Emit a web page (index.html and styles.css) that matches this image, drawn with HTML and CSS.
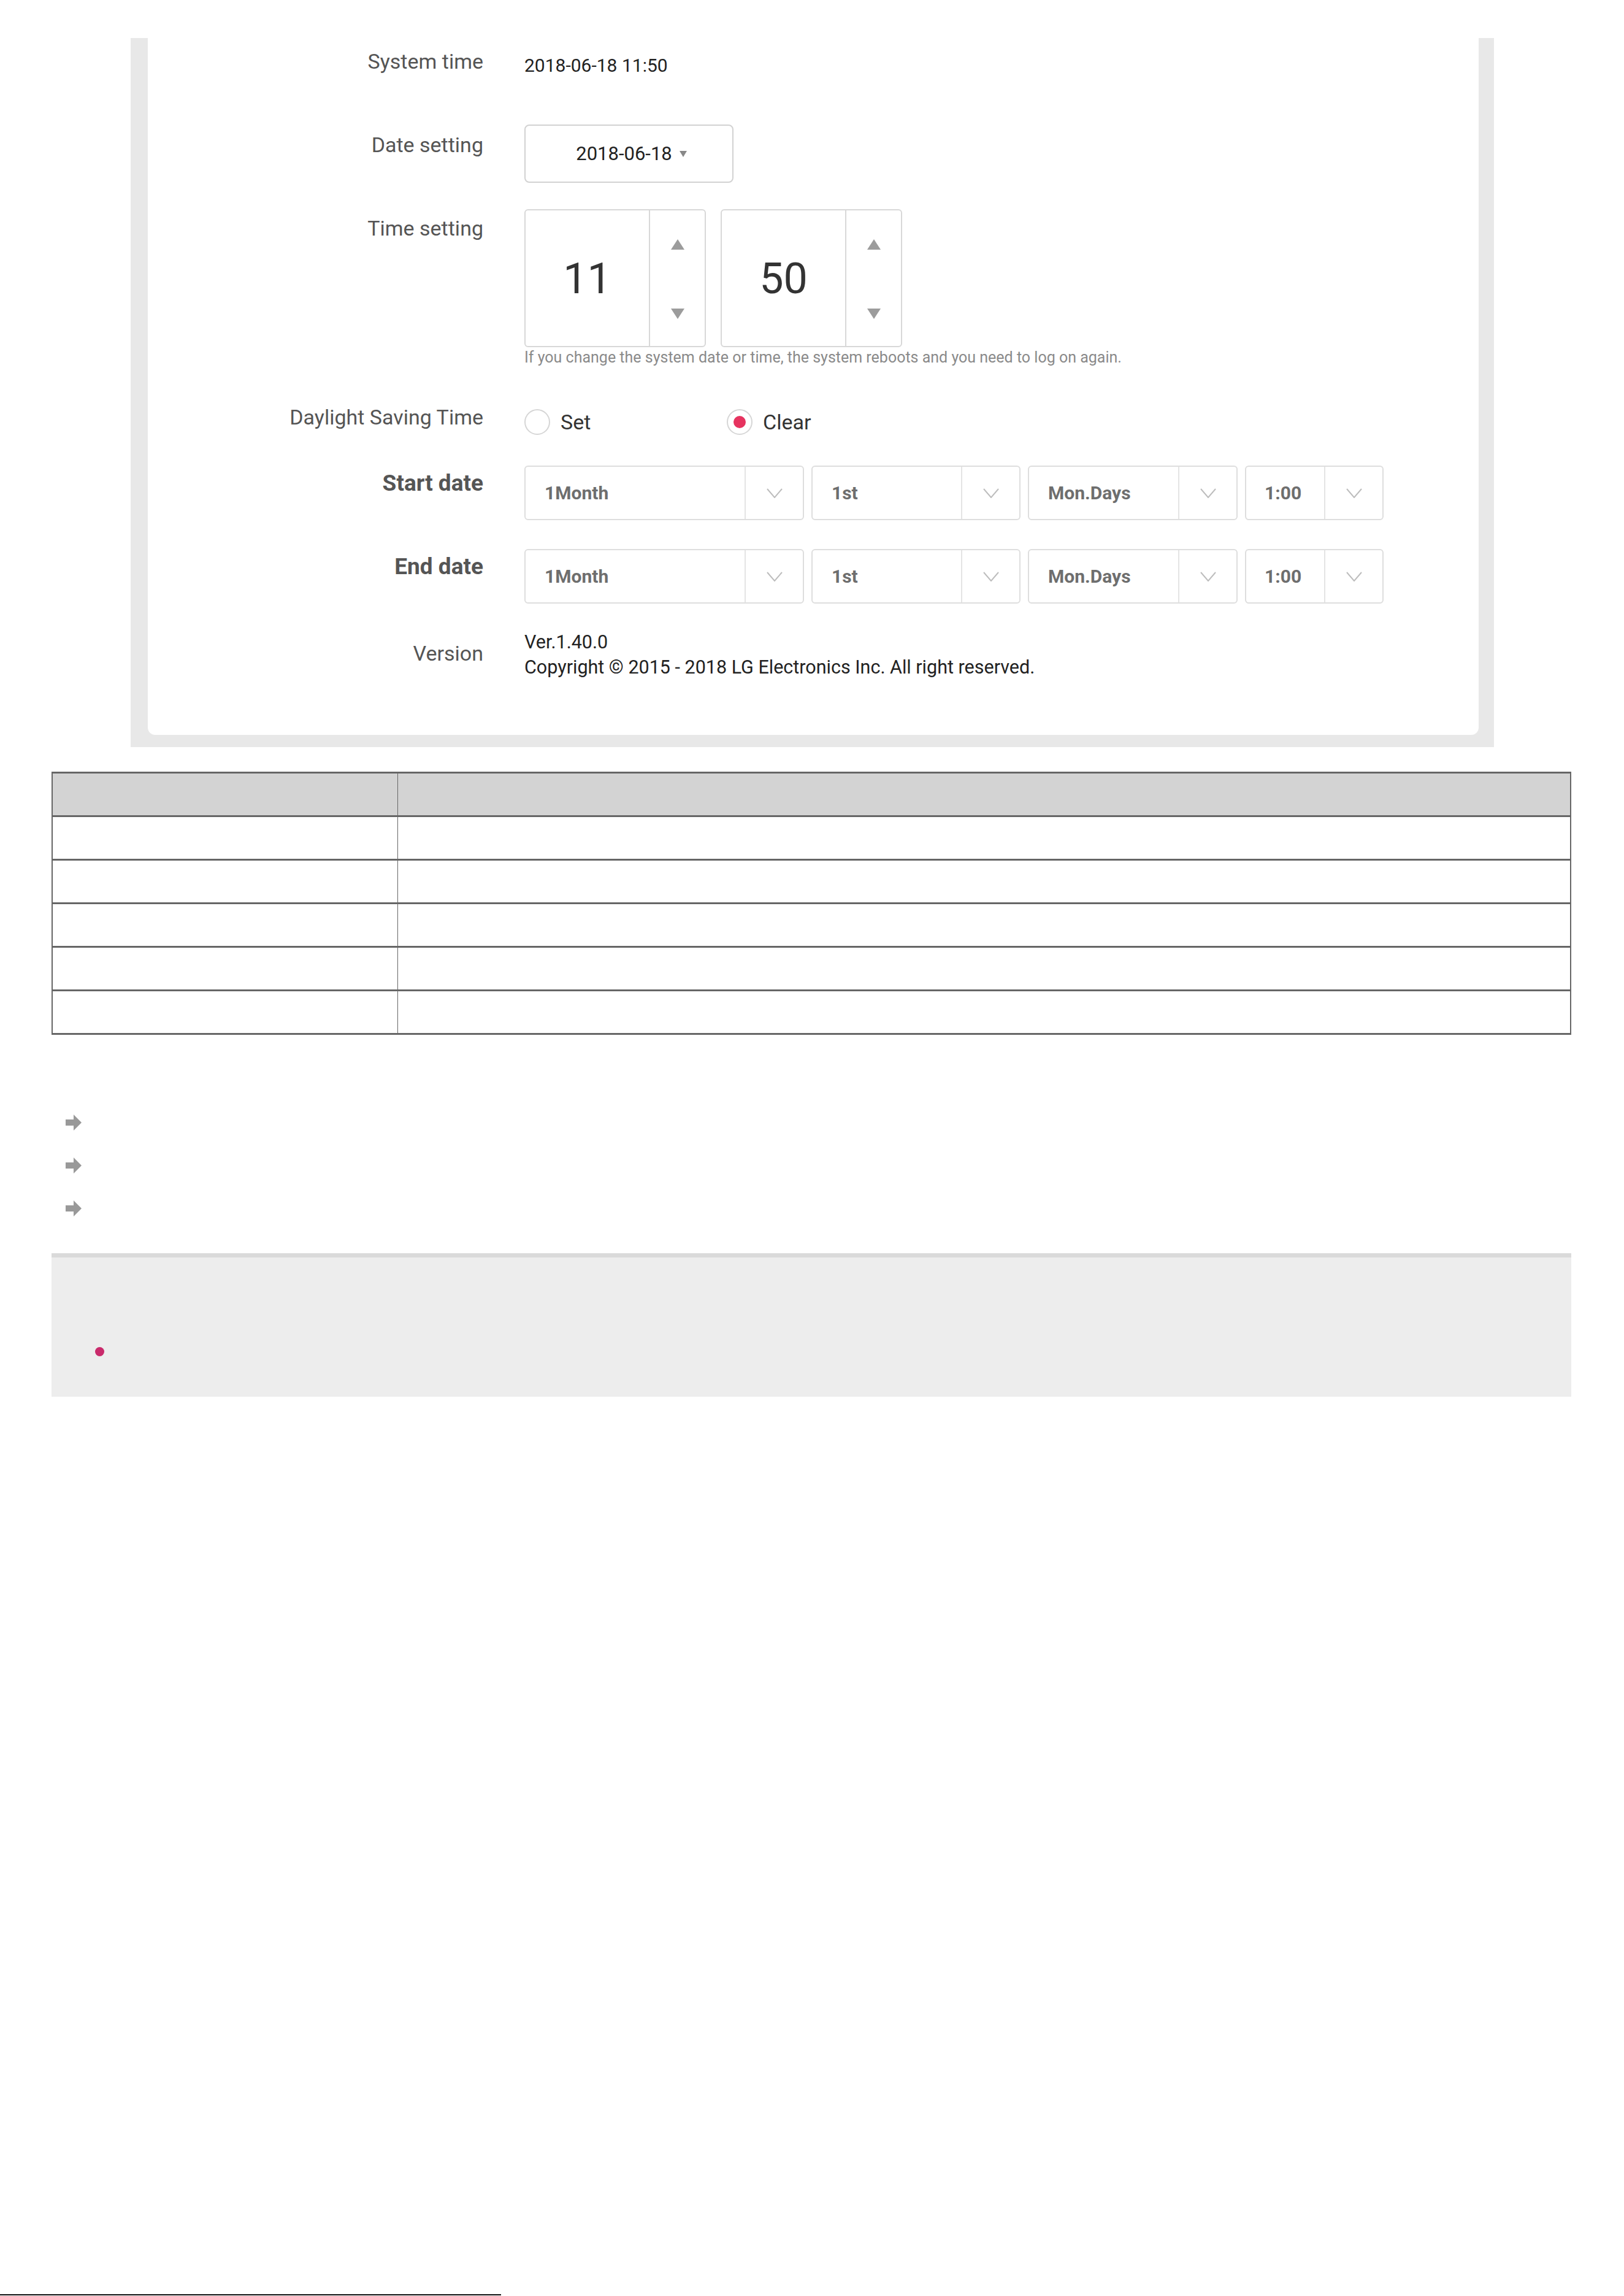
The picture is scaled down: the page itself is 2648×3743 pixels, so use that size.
FILE: index.html
```html
<!DOCTYPE html>
<html lang="en">
  <head>
    <meta charset="UTF-8" />
    <meta name="viewport" content="width=device-width, initial-scale=1.0" />
    <title>System time settings</title>
    <link rel="stylesheet" href="styles.css">
  </head>
  <body>
    <div class="shot">
      <div class="card">
        <div class="row row-systime">
          <div class="label">System time</div>
          <div class="value value-text">2018-06-18 11:50</div>
        </div>

        <div class="row row-date">
          <div class="label">Date setting</div>
          <div class="value">
            <button class="date-box" type="button">
              2018-06-18
              <svg class="caret" width="12" height="10" viewBox="0 0 12 10"><path d="M0 0h12L6 10z" /></svg>
            </button>
          </div>
        </div>

        <div class="row row-time">
          <div class="label">Time setting</div>
          <div class="value">
            <div class="spinners">
              <div class="spinner">
                <div class="spin-num">11</div>
                <div class="spin-btns">
                  <svg width="22" height="17" viewBox="0 0 22 17"><path d="M11 0l11 17H0z" /></svg>
                  <svg width="22" height="17" viewBox="0 0 22 17"><path d="M0 0h22L11 17z" /></svg>
                </div>
              </div>
              <div class="spinner">
                <div class="spin-num">50</div>
                <div class="spin-btns">
                  <svg width="22" height="17" viewBox="0 0 22 17"><path d="M11 0l11 17H0z" /></svg>
                  <svg width="22" height="17" viewBox="0 0 22 17"><path d="M0 0h22L11 17z" /></svg>
                </div>
              </div>
            </div>
            <p class="hint">If you change the system date or time, the system reboots and you need to log on again.</p>
          </div>
        </div>

        <div class="row row-dst">
          <div class="label">Daylight Saving Time</div>
          <div class="value radios">
            <label class="radio"><span class="dot"></span>Set</label>
            <label class="radio checked"><span class="dot"></span>Clear</label>
          </div>
        </div>

        <div class="row row-select">
          <div class="label strong">Start date</div>
          <div class="value selects">
            <div class="select w-month"><span>1Month</span><i class="chev"><svg width="26" height="16" viewBox="0 0 26 16"><path d="M1 1l12 14L25 1" /></svg></i></div>
            <div class="select w-week"><span>1st</span><i class="chev"><svg width="26" height="16" viewBox="0 0 26 16"><path d="M1 1l12 14L25 1" /></svg></i></div>
            <div class="select w-day"><span>Mon.Days</span><i class="chev"><svg width="26" height="16" viewBox="0 0 26 16"><path d="M1 1l12 14L25 1" /></svg></i></div>
            <div class="select w-hour"><span>1:00</span><i class="chev"><svg width="26" height="16" viewBox="0 0 26 16"><path d="M1 1l12 14L25 1" /></svg></i></div>
          </div>
        </div>

        <div class="row row-select">
          <div class="label strong">End date</div>
          <div class="value selects">
            <div class="select w-month"><span>1Month</span><i class="chev"><svg width="26" height="16" viewBox="0 0 26 16"><path d="M1 1l12 14L25 1" /></svg></i></div>
            <div class="select w-week"><span>1st</span><i class="chev"><svg width="26" height="16" viewBox="0 0 26 16"><path d="M1 1l12 14L25 1" /></svg></i></div>
            <div class="select w-day"><span>Mon.Days</span><i class="chev"><svg width="26" height="16" viewBox="0 0 26 16"><path d="M1 1l12 14L25 1" /></svg></i></div>
            <div class="select w-hour"><span>1:00</span><i class="chev"><svg width="26" height="16" viewBox="0 0 26 16"><path d="M1 1l12 14L25 1" /></svg></i></div>
          </div>
        </div>

        <div class="row row-version">
          <div class="label">Version</div>
          <div class="value version">
            <div>Ver.1.40.0</div>
            <div>Copyright © 2015 - 2018 LG Electronics Inc. All right reserved.</div>
          </div>
        </div>
      </div>
    </div>

    <table class="spec">
      <tr class="head"><td></td><td></td></tr>
      <tr><td></td><td></td></tr>
      <tr><td></td><td></td></tr>
      <tr><td></td><td></td></tr>
      <tr><td></td><td></td></tr>
      <tr><td></td><td></td></tr>
    </table>

    <ul class="steps">
      <li><svg width="27" height="26" viewBox="0 0 27 26"><path d="M0 8h13V0l13 13-13 13v-8H0z" /></svg></li>
      <li><svg width="27" height="26" viewBox="0 0 27 26"><path d="M0 8h13V0l13 13-13 13v-8H0z" /></svg></li>
      <li><svg width="27" height="26" viewBox="0 0 27 26"><path d="M0 8h13V0l13 13-13 13v-8H0z" /></svg></li>
    </ul>

    <div class="note">
      <ul>
        <li></li>
      </ul>
    </div>

    <div class="page-end"></div>
  </body>
</html>
```

FILE: styles.css
```css
body {
  margin: 0;
  font-family: Roboto, "Noto Sans", sans-serif;
  color: #333;
  background: #fff;
}

/* grey screen frame around the settings card */
.shot {
  box-sizing: border-box;
  width: 2223px;
  margin: 62px 0 0 213px;
  padding: 0 25px 20px 28px;
  background: #e8e8e8;
}
.card {
  box-sizing: border-box;
  height: 1136px;
  padding-top: 14px;
  background: #fff;
  border-radius: 0 0 12px 12px;
}

.row {
  display: flex;
  align-items: flex-start;
}
.label {
  flex: none;
  width: 547px;
  margin-right: 67px;
  text-align: right;
  font-size: 34px;
  line-height: 48px;
  color: #555;
}
.label.strong {
  font-weight: 700;
  font-size: 37px;
}
.value {
  flex: none;
}
.value-text {
  padding-top: 7px;
  font-size: 30px;
  line-height: 48px;
  color: #222;
}

.row-date { margin-top: 72px; }
.row-date .label { padding-top: 9px; }
.row-time { margin-top: 43px; }
.row-time .label { padding-top: 7px; }
.row-dst { margin-top: 58px; }
.row-select { margin-top: 47px; }
.row-select .label { padding-top: 5px; }
.row-version { margin-top: 42px; }
.row-version .label { padding-top: 15px; }

/* date picker */
.date-box {
  box-sizing: border-box;
  display: flex;
  align-items: center;
  justify-content: center;
  gap: 12px;
  width: 341px;
  height: 95px;
  padding: 0 0 0 8px;
  border: 2px solid #d2d2d2;
  border-radius: 8px;
  background: #fff;
  font-family: inherit;
  font-size: 31px;
  color: #222;
}
.caret path { fill: #888; }

/* hour / minute spinners */
.spinners {
  display: flex;
  gap: 24px;
}
.spinner {
  box-sizing: border-box;
  display: flex;
  width: 296px;
  height: 225px;
  border: 2px solid #d8d8d8;
  border-radius: 6px;
}
.spin-num {
  width: 201px;
  display: flex;
  align-items: center;
  justify-content: center;
  font-size: 70px;
  color: #333;
  border-right: 2px solid #d8d8d8;
}
.spin-btns {
  flex: 1;
  display: flex;
  flex-direction: column;
  align-items: center;
  justify-content: space-between;
  padding: 47px 0 44px;
}
.spin-btns path { fill: #9c9c9c; }
.hint {
  margin: 2px 0 0;
  font-size: 25px;
  line-height: 30px;
  color: #8a8a8a;
  white-space: nowrap;
}

/* daylight saving radios */
.radios {
  display: flex;
  align-items: center;
  height: 48px;
  padding-top: 8px;
}
.radio {
  display: flex;
  align-items: center;
  width: 330px;
  font-size: 34px;
  color: #333;
}
.radio .dot {
  box-sizing: border-box;
  width: 42px;
  height: 42px;
  margin-right: 17px;
  border: 2px solid #d6d6d6;
  border-radius: 50%;
  display: flex;
  align-items: center;
  justify-content: center;
}
.radio.checked .dot::after {
  content: "";
  width: 20px;
  height: 20px;
  border-radius: 50%;
  background: #e6335f;
}

/* start / end date selects */
.selects {
  display: flex;
  gap: 12px;
}
.select {
  box-sizing: border-box;
  display: flex;
  height: 89px;
  border: 2px solid #dedede;
  border-radius: 6px;
  font-size: 30px;
  font-weight: 700;
  color: #6e6e6e;
}
.select span {
  flex: 1;
  display: flex;
  align-items: center;
  padding-left: 31px;
  border-right: 2px solid #e4e4e4;
}
.select .chev {
  width: 93px;
  display: flex;
  align-items: center;
  justify-content: center;
}
.chev path {
  fill: none;
  stroke: #bdbdbd;
  stroke-width: 2;
}
.w-month { width: 456px; }
.w-week { width: 341px; }
.w-day { width: 342px; }
.w-hour { width: 226px; }
.w-hour span { padding-left: 30px; }

.version {
  font-size: 30.5px;
  line-height: 41px;
  color: #222;
}

/* empty description table */
.spec {
  width: 2478px;
  margin: 40px 0 0 84px;
  border-collapse: collapse;
}
.spec td {
  height: 68px;
  padding: 0;
  border-top: 3px solid #666;
  border-bottom: 3px solid #666;
  border-left: 1px solid #666;
  border-right: 1px solid #666;
}
.spec td:first-child {
  width: 562px;
  border-left-width: 2px;
}
.spec td:last-child {
  border-right-width: 2px;
}
.spec .head td {
  background: #d3d3d3;
}

.steps {
  list-style: none;
  margin: 108px 0 0;
  padding: 0 0 0 107px;
}
.steps li {
  height: 70px;
  display: flex;
  align-items: center;
}
.steps path { fill: #999; }

.note {
  box-sizing: border-box;
  width: 2478px;
  height: 234px;
  margin: 38px 0 0 84px;
  border-top: 7px solid #dadada;
  background: #ededed;
}
.note ul {
  list-style: none;
  margin: 0;
  padding: 146px 0 0 71px;
}
.note li {
  width: 15px;
  height: 15px;
  border-radius: 50%;
  background: #c92a6b;
}

.page-end {
  width: 817px;
  height: 2px;
  margin-top: 1463px;
  background: #111;
}
```
